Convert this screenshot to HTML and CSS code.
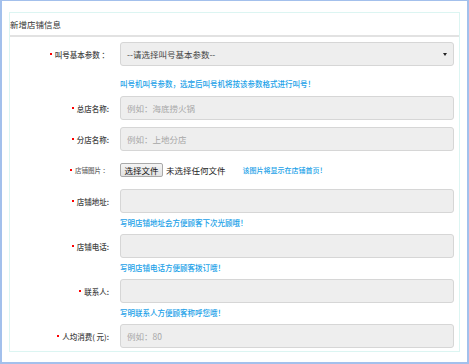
FILE: index.html
```html
<!DOCTYPE html>
<html lang="zh-CN">
<head>
<meta charset="utf-8">
<title>新增店铺信息</title>
<link rel="stylesheet" href="styles.css">
</head>
<body>
<div class="frame">
  <div class="panel">
    <div class="panel-head">新增店铺信息</div>
    <form class="form">
      <div class="row">
        <label class="label"><i class="dot"></i>叫号基本参数 ：</label>
        <div class="select">--请选择叫号基本参数--<span class="caret"></span></div>
      </div>
      <div class="help help-first">叫号机叫号参数，选定后叫号机将按该参数格式进行叫号！</div>
      <div class="row">
        <label class="label"><i class="dot"></i>总店名称:</label>
        <div class="input placeholder">例如：海底捞火锅</div>
      </div>
      <div class="row gap7">
        <label class="label"><i class="dot"></i>分店名称:</label>
        <div class="input placeholder">例如：上地分店</div>
      </div>
      <div class="row file-row">
        <label class="label label-small"><i class="dot"></i>店铺图片 ：</label>
        <span class="file-btn">选择文件</span>
        <span class="file-name">未选择任何文件</span>
        <span class="help inline">该图片将显示在店铺首页！</span>
      </div>
      <div class="row after-file">
        <label class="label"><i class="dot"></i>店铺地址:</label>
        <div class="input"></div>
      </div>
      <div class="help">写明店铺地址会方便顾客下次光顾哦！</div>
      <div class="row">
        <label class="label"><i class="dot"></i>店铺电话:</label>
        <div class="input"></div>
      </div>
      <div class="help">写明店铺电话方便顾客拨订哦！</div>
      <div class="row">
        <label class="label"><i class="dot"></i>联系人:</label>
        <div class="input"></div>
      </div>
      <div class="help">写明联系人方便顾客称呼您哦！</div>
      <div class="row">
        <label class="label"><i class="dot"></i>人均消费( 元):</label>
        <div class="input placeholder">例如：80</div>
      </div>
    </form>
  </div>
</div>
</body>
</html>
```

FILE: styles.css
```css
html, body {
  margin: 0;
  padding: 0;
  background: #ffffff;
}

body {
  font-family: "Noto Sans CJK SC", "Noto Sans", sans-serif;
  color: #333;
}

.frame {
  width: 469px;
  height: 364px;
  box-sizing: border-box;
  border: 2px solid #a3c0ec;
  border-top-width: 1px;
  padding: 11px 7px 0 7px;
  background: #fff;
}

.panel {
  border: 1px solid #dcf5f2;
  padding-bottom: 3px;
}

.panel-head {
  height: 21px;
  line-height: 21px;
  padding-top: 1px;
  font-size: 8.5px;
  color: #333;
  border-bottom: 2px solid #e2e2e2;
}

.form {
  padding-top: 5px;
  display: flex;
  flex-direction: column;
}

.row {
  display: flex;
  align-items: center;
}

.gap7 {
  margin-top: 7px;
}

.file-row {
  margin-top: 12px;
  height: 14px;
}

.after-file {
  margin-top: 12px;
}

.label {
  width: 99px;
  flex: none;
  text-align: right;
  font-size: 7.5px;
  font-weight: 500;
  color: #444;
  margin-right: 11px;
  white-space: nowrap;
}

.label-small {
  font-size: 6.5px;
  color: #666;
}

.dot {
  display: inline-block;
  width: 2px;
  height: 2px;
  background: #ff0000;
  margin-right: 3px;
  vertical-align: middle;
  position: relative;
  top: -1px;
}

.input,
.select {
  width: 334px;
  height: 24px;
  box-sizing: border-box;
  background: #eeeeee;
  border: 1px solid #d6d6d6;
  border-radius: 3px;
  font-size: 8.5px;
  line-height: 22px;
  padding-left: 6px;
  color: #444;
}

.select {
  display: flex;
  justify-content: space-between;
  align-items: center;
  padding-right: 6px;
  line-height: normal;
}

.caret {
  width: 0;
  height: 0;
  border-left: 2px solid transparent;
  border-right: 2px solid transparent;
  border-top: 3px solid #222;
}

.placeholder {
  color: #a6a6a6;
}

.file-btn {
  box-sizing: border-box;
  width: 43px;
  height: 14px;
  border: 1px solid #a9a9a9;
  border-radius: 2px;
  background: linear-gradient(#f4f4f4, #e2e2e2);
  font-size: 8.5px;
  line-height: 12px;
  text-align: center;
  color: #111;
}

.file-name {
  margin-left: 3px;
  font-size: 8.5px;
  color: #222;
}

.help {
  margin: 4px 0 5px 110px;
  height: 12px;
  line-height: 12px;
  font-size: 7.5px;
  font-weight: 500;
  color: #1a9fe8;
  white-space: nowrap;
}

.help-first {
  margin-top: 12px;
  margin-bottom: 6px;
}

.help.inline {
  margin: 0 0 0 17px;
  font-size: 7px;
}
```
